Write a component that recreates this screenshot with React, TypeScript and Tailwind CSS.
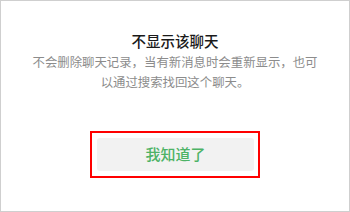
import React from 'react';

export default function App() {
  return (
    <div
      className="w-[350px] h-[212px] bg-white border border-[#cfcfcf] flex flex-col items-center"
      style={{ fontFamily: '"Noto Sans CJK SC", "Noto Sans", sans-serif' }}
    >
      {/* Title */}
      <h2 className="mt-[30px] text-[14.5px] leading-[20px] font-medium text-[#1a1a1a]">
        不显示该聊天
      </h2>
      {/* Description */}
      <p className="mt-[1px] text-center text-[12.4px] leading-[20px] text-[#8c8c8c] whitespace-nowrap">
        不会删除聊天记录，当有新消息时会重新显示，也可
        <br />
        以通过搜索找回这个聊天。
      </p>
      {/* Highlighted button */}
      <div className="mt-[39px] w-[170px] h-[47px] border-2 border-[#ff0000] pt-[5px] pl-[5px] pr-[4px]">
        <button className="w-full h-[33px] rounded-[3px] bg-[#f2f2f2] text-[15px] font-medium text-[#4db366] flex items-center justify-center">
          我知道了
        </button>
      </div>
    </div>
  );
}
